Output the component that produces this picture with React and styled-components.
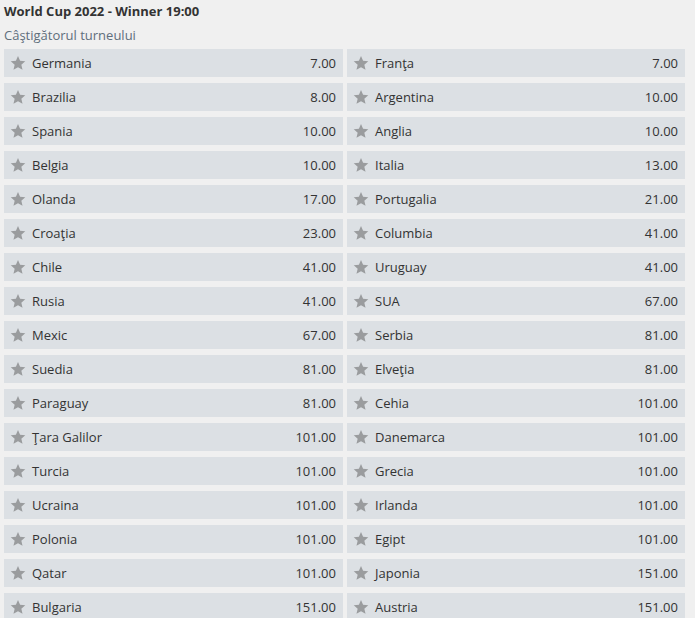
import React from 'react';
import styled, { createGlobalStyle } from 'styled-components';

const ODDS = [
  ['Germania', '7.00', 'Franţa', '7.00'],
  ['Brazilia', '8.00', 'Argentina', '10.00'],
  ['Spania', '10.00', 'Anglia', '10.00'],
  ['Belgia', '10.00', 'Italia', '13.00'],
  ['Olanda', '17.00', 'Portugalia', '21.00'],
  ['Croaţia', '23.00', 'Columbia', '41.00'],
  ['Chile', '41.00', 'Uruguay', '41.00'],
  ['Rusia', '41.00', 'SUA', '67.00'],
  ['Mexic', '67.00', 'Serbia', '81.00'],
  ['Suedia', '81.00', 'Elveţia', '81.00'],
  ['Paraguay', '81.00', 'Cehia', '101.00'],
  ['Ţara Galilor', '101.00', 'Danemarca', '101.00'],
  ['Turcia', '101.00', 'Grecia', '101.00'],
  ['Ucraina', '101.00', 'Irlanda', '101.00'],
  ['Polonia', '101.00', 'Egipt', '101.00'],
  ['Qatar', '101.00', 'Japonia', '151.00'],
  ['Bulgaria', '151.00', 'Austria', '151.00'],
];

const Star = () => (
  <StarIcon viewBox='0 0 24 24'>
    <path d='M12 1.5l3.1 7.2 7.8.7-5.9 5.2 1.8 7.7L12 18.2l-6.8 4.1 1.8-7.7L1.1 9.4l7.8-.7z' />
  </StarIcon>
);

const Selection = ({ name, odd }) => (
  <Row>
    <Star />
    <Name>{name}</Name>
    <Odd>{odd}</Odd>
  </Row>
);

const App = () => (
  <>
    <PageStyle />
    <Market>
      <Title>World Cup 2022 - Winner 19:00</Title>
      <Subtitle>Câştigătorul turneului</Subtitle>
      <Grid>
        {ODDS.map(([a, oa, b, ob]) => (
          <React.Fragment key={a}>
            <Selection name={a} odd={oa} />
            <Selection name={b} odd={ob} />
          </React.Fragment>
        ))}
      </Grid>
    </Market>
  </>
);

export default App;

const PageStyle = createGlobalStyle({
  body: {
    margin: 0,
    backgroundColor: '#f0f0f0',
    fontFamily: '"Open Sans", "Noto Sans", sans-serif',
    fontSize: 13,
    color: '#333',
  },
});

const Market = styled.div({
  padding: '2px 10px 0 4px',
});

const Title = styled.div({
  fontWeight: 700,
  fontSize: 13,
  lineHeight: '18px',
  color: '#333',
});

const Subtitle = styled.div({
  marginTop: 6,
  lineHeight: '18px',
  color: '#5f6e7c',
});

const Grid = styled.div({
  display: 'grid',
  gridTemplateColumns: '339px 338px',
  columnGap: 4,
  rowGap: 6,
  marginTop: 5,
});

const Row = styled.div({
  display: 'flex',
  alignItems: 'center',
  height: 28,
  padding: '0 7px 0 6px',
  backgroundColor: '#dce0e4',
});

const StarIcon = styled.svg({
  width: 16,
  height: 16,
  fill: '#9a9c9e',
  flexShrink: 0,
});

const Name = styled.span({
  marginLeft: 6,
  flex: 1,
  color: '#333',
});

const Odd = styled.span({
  color: '#333',
});
